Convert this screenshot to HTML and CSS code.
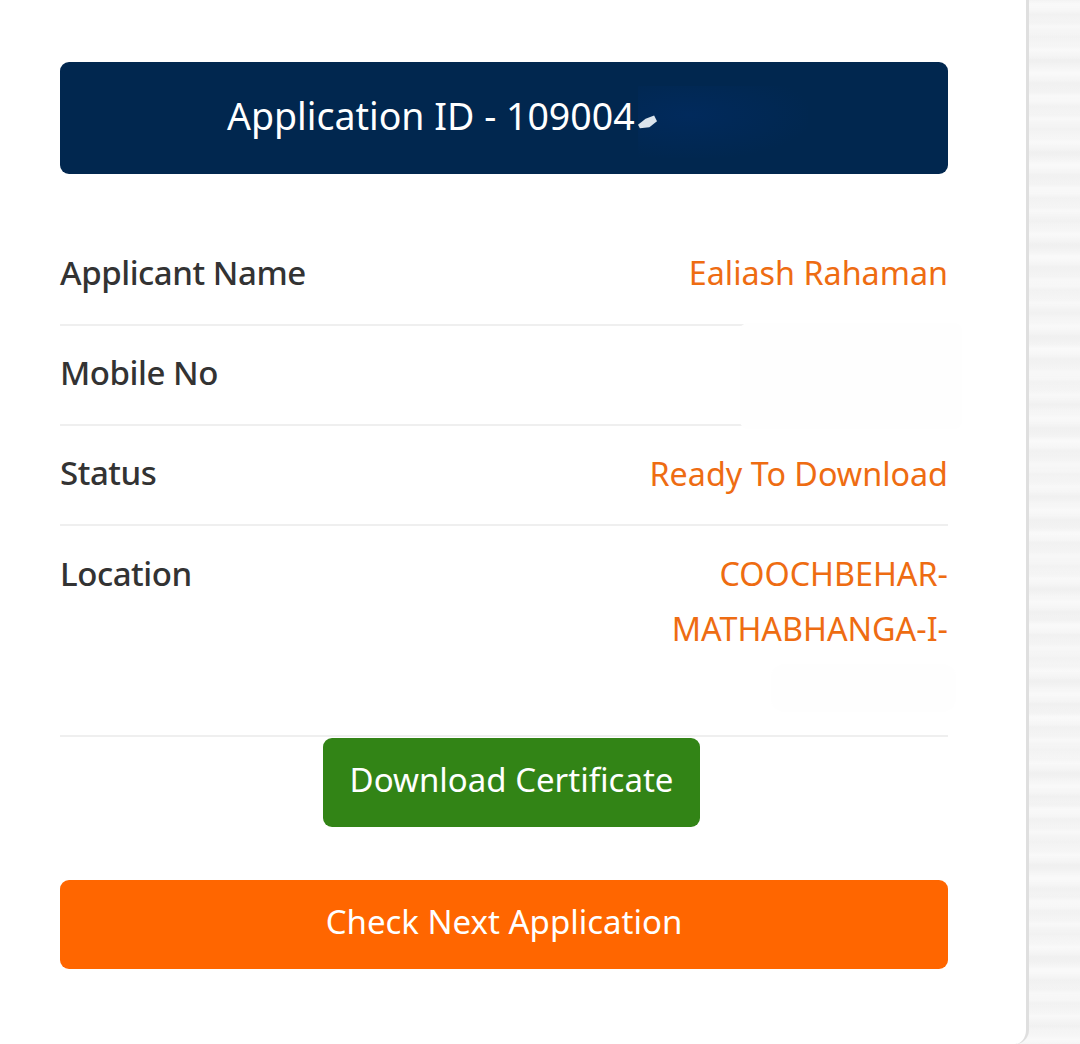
FILE: index.html
```html
<!DOCTYPE html>
<html lang="en">
<head>
<meta charset="utf-8">
<title>Application Status</title>
<link rel="stylesheet" href="styles.css">
</head>
<body>
<main class="card">
  <header class="app-id">
    <span>Application ID - 109004</span>
    <i class="blur-patch"></i>
    <i class="smudge"></i>
  </header>
  <section class="details">
    <div class="row">
      <span class="label">Applicant Name</span>
      <span class="value">Ealiash Rahaman</span>
    </div>
    <div class="row row-masked">
      <span class="label">Mobile No</span>
      <i class="mask"></i>
    </div>
    <div class="row">
      <span class="label">Status</span>
      <span class="value">Ready To Download</span>
    </div>
    <div class="row row-location">
      <span class="label">Location</span>
      <span class="value value-stack">COOCHBEHAR-<br>MATHABHANGA-I-<br>&nbsp;</span>
      <i class="mask-small"></i>
    </div>
  </section>
  <div class="download-wrap">
    <a class="btn btn-green">Download Certificate</a>
  </div>
  <a class="btn btn-orange">Check Next Application</a>
</main>
</body>
</html>
```

FILE: styles.css
```css
* { box-sizing: border-box; }
html, body { height: 100%; }
body {
  margin: 0;
  height: 1044px;
  overflow: hidden;
  font-family: "Noto Sans", "Open Sans", sans-serif;
  background-color: #f3f3f3;
  background-image:
    repeating-linear-gradient(180deg, rgba(255,255,255,0) 0, rgba(255,255,255,0.4) 4px, rgba(255,255,255,0) 11px, rgba(230,230,230,0.25) 14px, rgba(255,255,255,0) 23px),
    repeating-linear-gradient(180deg, rgba(255,255,255,0) 0, rgba(255,255,255,0.3) 7px, rgba(255,255,255,0) 31px);
}
.card {
  width: 1029px;
  height: 1044px;
  padding: 62px 78px 0 60px;
  background: #fff;
  border-right: 3px solid #dfdfdf;
  border-bottom-right-radius: 14px;
}
.app-id {
  position: relative;
  display: flex;
  align-items: center;
  height: 112px;
  padding-left: 167px;
  padding-bottom: 5px;
  background: #01274f;
  border-radius: 9px;
  color: #fff;
  font-size: 37.5px;
  overflow: hidden;
}
.smudge {
  position: absolute;
  left: 578px;
  top: 50px;
  width: 19px;
  height: 17px;
  background: #dbe4ec;
  clip-path: polygon(0 75%, 40% 40%, 85% 20%, 100% 55%, 60% 90%, 10% 95%);
}
.blur-patch {
  position: absolute;
  left: 578px;
  top: 24px;
  width: 170px;
  height: 72px;
  background: radial-gradient(ellipse at 30% 40%, #012a5c 0%, rgba(1,39,79,0) 75%);
}
.details { margin-top: 51px; }
.row {
  position: relative;
  display: flex;
  justify-content: space-between;
  align-items: center;
  height: 101px;
  padding-bottom: 5px;
  border-bottom: 2px solid #efefef;
  font-size: 33px;
}
.row + .row { height: 100px; }
.row-location.row-location {
  align-items: flex-start;
  height: 211px;
  padding: 20px 0 0;
}
.label {
  color: #333333;
  font-weight: 500;
  letter-spacing: -0.45px;
}
.value {
  color: #ee6c12;
  font-size: 32.3px;
}
.value-stack {
  line-height: 55px;
  text-align: right;
}
.row-location .label { line-height: 55px; }
.mask {
  position: absolute;
  right: -14px;
  top: -3px;
  width: 222px;
  height: 106px;
  background: #fefefe;
  border-radius: 8px;
}
.mask-small {
  position: absolute;
  right: -8px;
  top: 138px;
  width: 185px;
  height: 48px;
  background: #fefefe;
  border-radius: 14px;
}
.download-wrap {
  display: flex;
  justify-content: center;
  padding-left: 15px;
  margin-top: 1px;
}
.btn {
  display: flex;
  align-items: center;
  justify-content: center;
  height: 89px;
  padding-bottom: 6px;
  border-radius: 9px;
  color: #fff;
  font-size: 33px;
}
.btn-green {
  width: 377px;
  background: #328416;
}
.btn-orange {
  margin-top: 53px;
  background: #ff6600;
}
```
